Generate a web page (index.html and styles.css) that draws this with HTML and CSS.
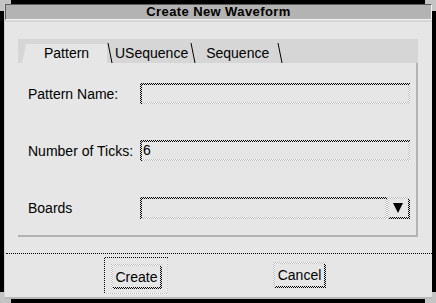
FILE: index.html
```html
<!DOCTYPE html>
<html lang="en">
<head>
    <meta charset="UTF-8">
    <title>Create New Waveform</title>
    <link rel="stylesheet" href="styles.css">
</head>
<body>
    <!-- window manager corner handles -->
    <span class="corner tl"></span>
    <span class="corner tr"></span>
    <span class="corner bl"></span>
    <span class="corner br"></span>

    <div class="window">
        <div class="titlebar">Create New Waveform</div>

        <div class="content">
            <div class="notebook">
                <div class="tabs">
                    <div class="tab active">Pattern</div>
                    <svg class="sep" width="6" height="20"><line x1="1" y1="0" x2="5" y2="20" stroke="#000" stroke-width="1"/></svg>
                    <div class="tab useq">USequence</div>
                    <svg class="sep" width="6" height="20"><line x1="1" y1="0" x2="5" y2="20" stroke="#000" stroke-width="1"/></svg>
                    <div class="tab seq">Sequence</div>
                    <svg class="sep" width="6" height="20"><line x1="1" y1="0" x2="5" y2="20" stroke="#000" stroke-width="1"/></svg>
                </div>

                <div class="page">
                    <label class="label">Pattern Name:</label>
                    <div class="field"><div class="field-in"><div class="field-txt"></div></div></div>

                    <label class="label">Number of Ticks:</label>
                    <div class="field"><div class="field-in"><div class="field-txt">6</div></div></div>

                    <label class="label">Boards</label>
                    <div class="combo">
                        <div class="field"><div class="field-in"><div class="field-txt"></div></div></div>
                        <div class="arrow-btn"><div class="arrow-in">
                            <svg width="10" height="10"><polygon points="0,0 10,0 5,10" fill="#000"/></svg>
                        </div></div>
                    </div>
                </div>
            </div>
        </div>

        <div class="separator"></div>

        <div class="actions">
            <div class="default-ring"><div class="ring-in">
                <div class="btn create"><div class="btn-in">Create</div></div>
            </div></div>
            <div class="btn cancel"><div class="btn-in">Cancel</div></div>
        </div>
    </div>
</body>
</html>
```

FILE: styles.css
```css
* {
    box-sizing: border-box;
}
body {
    margin: 0;
    width: 436px;
    height: 303px;
    overflow: hidden;
    background: #000;
    font-family: "Liberation Sans", Arial, sans-serif;
    font-size: 14px;
    color: #000;
    position: relative;
}
.corner {
    position: absolute;
    width: 11px;
    height: 11px;
    border-color: #c4c4c4;
    border-style: solid;
    border-width: 0;
}
.corner.tl { left: 0; top: 0; border-top-width: 4px; border-left-width: 4px; }
.corner.tr { right: 0; top: 0; border-top-width: 4px; border-right-width: 4px; }
.corner.bl { left: 0; bottom: 0; border-bottom-width: 4px; border-left-width: 4px; }
.corner.br { right: 0; bottom: 0; border-bottom-width: 4px; border-right-width: 4px; }

.window {
    margin: 4px 0 0 4px;
    width: 428px;
    height: 295px;
    background: #e6e6e6;
    border-bottom: 2px solid #b8b8b8;
    border-left: 1px solid #d0d0d0;
    display: flex;
    flex-direction: column;
}
.titlebar {
    height: 16px;
    background: #b3b3b3;
    border-top: 1px solid #5c5c5c;
    border-left: 1px solid #5c5c5c;
    border-right: 1px solid #f4f4f4;
    border-bottom: 1px solid #f4f4f4;
    font-size: 13px;
    font-weight: bold;
    letter-spacing: 0.4px;
    line-height: 14px;
    text-align: center;
}
.content {
    padding: 17px 0 16px 13px;
    border-top: 2px solid #d6d6d6;
}
.notebook {
    width: 400px;
}
.tabs {
    height: 24px;
    background: #d6d6d6;
    display: flex;
    align-items: flex-end;
    padding-left: 4px;
}
.tab {
    height: 19px;
    line-height: 19px;
    white-space: nowrap;
}
.tab.active {
    background: #e6e6e6;
    width: 85px;
    padding-left: 22px;
    clip-path: polygon(4px 0, 100% 0, 100% 100%, 0 100%);
}
.tab.useq {
    padding: 0 2px 0 2px;
}
.tab.seq {
    padding: 0 8px 0 10px;
}
.sep {
    display: block;
    flex-shrink: 0;
}
.page {
    height: 174px;
    border-right: 2px solid #b3b3b3;
    border-bottom: 2px solid #b3b3b3;
    padding: 20px 6px 0 10px;
    display: grid;
    grid-template-columns: 112px 1fr;
    grid-auto-rows: 21px;
    row-gap: 36px;
    align-items: center;
}
.page .combo {
    height: 22px;
}

/* sunken stipple bevel */
.field {
    height: 21px;
    padding: 2px 0 0 2px;
    background: repeating-conic-gradient(#000 0 25%, #e6e6e6 0 50%) 0 0 / 2px 2px;
}
.combo .field {
    height: 22px;
    flex: 1;
}
.field-in {
    height: 100%;
    padding: 0 2px 2px 0;
    background: repeating-conic-gradient(#fff 0 25%, #b8b8b8 0 50%) 0 0 / 2px 2px;
}
.field-txt {
    height: 100%;
    background: #e6e6e6;
    line-height: 17px;
    padding-left: 1px;
}
.combo {
    display: flex;
}
.arrow-btn {
    width: 23px;
    height: 22px;
    padding: 2px 0 0 2px;
    background: repeating-conic-gradient(#fff 0 25%, #b8b8b8 0 50%) 0 0 / 2px 2px;
}
.arrow-in {
    height: 100%;
    padding: 0 2px 2px 0;
    background: repeating-conic-gradient(#000 0 25%, #e6e6e6 0 50%) 0 0 / 2px 2px;
    display: flex;
}
.arrow-in svg {
    background: #e6e6e6;
    flex: 1;
    height: 100%;
    padding: 4px 5px 4px 4px;
    box-sizing: border-box;
    overflow: visible;
}

.separator {
    margin-left: 1px;
    border-top: 1px dotted #000;
}
.actions {
    flex: 1;
    display: flex;
    align-items: center;
    gap: 105px;
    padding: 2px 0 3px 99px;
}
.default-ring {
    width: 64px;
    height: 37px;
    padding: 1px 0 0 1px;
    background: repeating-conic-gradient(#000 0 25%, #e6e6e6 0 50%) 0 0 / 2px 2px;
}
.ring-in {
    height: 100%;
    padding: 0 1px 1px 0;
    background: repeating-conic-gradient(#fff 0 25%, #b8b8b8 0 50%) 0 0 / 2px 2px;
}
.ring-in .btn {
    margin: 0;
    height: 100%;
    border: 5px solid #e6e6e6;
    border-top-width: 6px;
    border-left-width: 6px;
    border-bottom-width: 4px;
    background-clip: padding-box;
}
.btn {
    height: 26px;
    padding: 2px 0 0 2px;
    background: repeating-conic-gradient(#fff 0 25%, #b8b8b8 0 50%) 0 0 / 2px 2px;
}
.btn.cancel {
    width: 53px;
}
.btn-in {
    height: 100%;
    padding: 0 2px 2px 0;
    background: repeating-conic-gradient(#000 0 25%, #e6e6e6 0 50%) 0 0 / 2px 2px;
    line-height: 22px;
    text-align: center;
    position: relative;
    isolation: isolate;
}
.btn-in::before {
    content: "";
    position: absolute;
    left: 0;
    top: 0;
    right: 2px;
    bottom: 2px;
    background: #e6e6e6;
    z-index: -1;
}
```
